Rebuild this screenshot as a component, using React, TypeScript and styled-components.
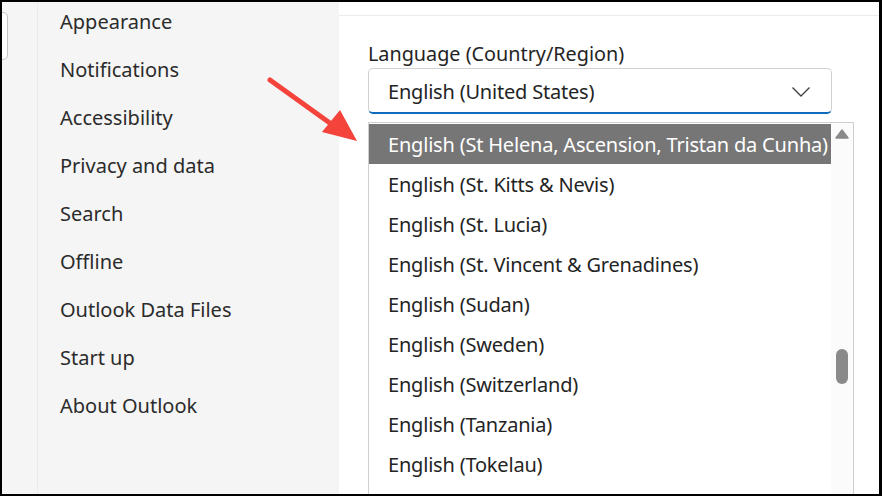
import styled, { createGlobalStyle } from "styled-components";

const GlobalStyle = createGlobalStyle`
  html, body {
    margin: 0;
    padding: 0;
    background: #000;
  }
  * {
    box-sizing: border-box;
  }
`;

const navItems = [
  "Appearance",
  "Notifications",
  "Accessibility",
  "Privacy and data",
  "Search",
  "Offline",
  "Outlook Data Files",
  "Start up",
  "About Outlook",
];

const languages = [
  "English (St Helena, Ascension, Tristan da Cunha)",
  "English (St. Kitts & Nevis)",
  "English (St. Lucia)",
  "English (St. Vincent & Grenadines)",
  "English (Sudan)",
  "English (Sweden)",
  "English (Switzerland)",
  "English (Tanzania)",
  "English (Tokelau)",
];

const font = `"Segoe UI", "Noto Sans", "Open Sans", sans-serif`;

const Frame = styled.div`
  width: 882px;
  height: 496px;
  border-style: solid;
  border-color: #000;
  border-width: 2px 3px 2px 2px;
  background: #f5f5f5;
  display: flex;
  overflow: hidden;
  position: relative;
  font-family: ${font};
`;

const Rail = styled.div`
  width: 36px;
  flex-shrink: 0;
  padding-top: 10px;
  border-right: 1px solid #ebebeb;
`;

const CutBox = styled.div`
  width: 16px;
  height: 48px;
  margin-left: -10px;
  background: #fff;
  border: 1px solid #c4c4c4;
  border-radius: 5px;
`;

const Nav = styled.nav`
  width: 301px;
  flex-shrink: 0;
  display: flex;
  flex-direction: column;
`;

const NavItem = styled.div`
  height: 48px;
  line-height: 40px;
  padding-left: 22px;
  font-size: 20px;
  color: #2b2b2b;
  white-space: nowrap;
`;

const Content = styled.main`
  flex: 1;
  background: #fff;
  display: flex;
  flex-direction: column;
`;

const TopBar = styled.div`
  height: 14px;
  flex-shrink: 0;
  border-bottom: 1px solid #ebebeb;
`;

const Body = styled.div`
  padding: 25px 0 0 29px;
  display: flex;
  flex-direction: column;
`;

const Label = styled.div`
  font-size: 19.8px;
  line-height: 26px;
  color: #242424;
  margin-bottom: 1px;
`;

const Select = styled.div`
  width: 464px;
  height: 46px;
  border: 1px solid #d1d1d1;
  border-bottom: 2px solid #0f6cbd;
  border-radius: 5px;
  display: flex;
  align-items: center;
  justify-content: space-between;
  padding: 2px 20px 0 19px;
  font-size: 20px;
  letter-spacing: -0.2px;
  color: #242424;
`;

const ListBox = styled.div`
  margin-top: 8px;
  width: 486px;
  height: 420px;
  border: 1px solid #cfcfcf;
  display: flex;
  background: #fff;
`;

const Options = styled.div`
  flex: 1;
  padding-top: 1px;
  display: flex;
  flex-direction: column;
`;

const Option = styled.div<{ $selected?: boolean }>`
  height: 40px;
  flex-shrink: 0;
  display: flex;
  align-items: center;
  padding-left: 19px;
  font-size: 20px;
  letter-spacing: -0.2px;
  white-space: nowrap;
  color: ${(p) => (p.$selected ? "#fff" : "#242424")};
  background: ${(p) => (p.$selected ? "#767676" : "transparent")};
`;

const Scrollbar = styled.div`
  width: 22px;
  flex-shrink: 0;
  background: #fbfbfb;
  display: flex;
  flex-direction: column;
  align-items: center;
  padding-top: 6px;
`;

const Thumb = styled.div`
  width: 12px;
  height: 35px;
  border-radius: 6px;
  background: #8a8a8a;
  margin-top: 210px;
`;

const Arrow = styled.svg`
  position: absolute;
  left: 262px;
  top: 72px;
`;

export default function App() {
  return (
    <>
      <GlobalStyle />
      <Frame>
        <Rail>
          <CutBox />
        </Rail>
        <Nav>
          {navItems.map((item) => (
            <NavItem key={item}>{item}</NavItem>
          ))}
        </Nav>
        <Content>
          <TopBar />
          <Body>
            <Label>Language (Country/Region)</Label>
            <Select>
              <span>English (United States)</span>
              <svg width="20" height="12" viewBox="0 0 20 12">
                <path d="M1.5 1.5 L10 10 L18.5 1.5" fill="none" stroke="#424242" strokeWidth="1.4" />
              </svg>
            </Select>
            <ListBox>
              <Options>
                {languages.map((lang, i) => (
                  <Option key={lang} $selected={i === 0}>
                    {lang}
                  </Option>
                ))}
              </Options>
              <Scrollbar>
                <svg width="14" height="10" viewBox="0 0 14 10">
                  <path d="M7 1 L13 9 L1 9 Z" fill="#8a8a8a" stroke="#8a8a8a" strokeWidth="1.5" strokeLinejoin="round" />
                </svg>
                <Thumb />
              </Scrollbar>
            </ListBox>
          </Body>
        </Content>
        <Arrow width="100" height="72" viewBox="0 0 100 72">
          <line x1="6" y1="6" x2="70" y2="52" stroke="#f4433a" strokeWidth="5" strokeLinecap="round" />
          <path d="M93 67 L58 58 L76 36 Z" fill="#f4433a" />
        </Arrow>
      </Frame>
    </>
  );
}
